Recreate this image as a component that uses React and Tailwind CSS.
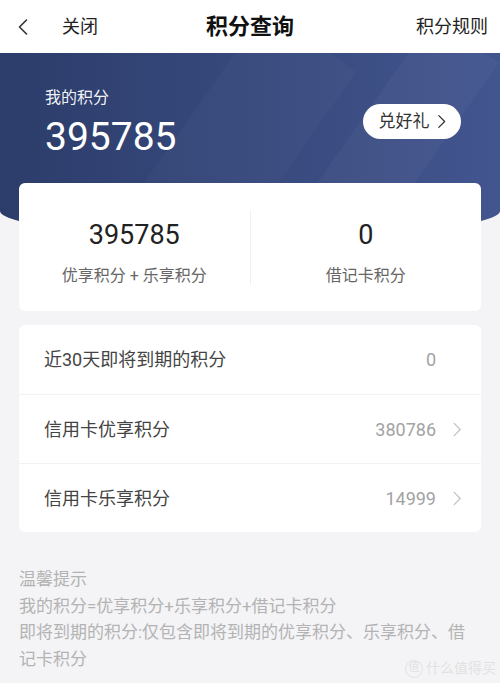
import { ChevronLeft } from 'lucide-react';

const rows = [
  { label: '近30天即将到期的积分', value: '0', arrow: false },
  { label: '信用卡优享积分', value: '380786', arrow: true },
  { label: '信用卡乐享积分', value: '14999', arrow: true },
];

function Arrow({ className }) {
  return (
    <svg viewBox="0 0 10 16" className={className} fill="none" stroke="currentColor" strokeWidth="1.4" strokeLinecap="round" strokeLinejoin="round">
      <path d="M2 1.5 8.5 8 2 14.5" />
    </svg>
  );
}

export default function App() {
  return (
    <div
      className="relative min-h-[683px] w-[500px] overflow-hidden bg-[#f4f4f6]"
      style={{ fontFamily: 'Roboto, "Noto Sans CJK SC", sans-serif' }}
    >
      {/* nav bar */}
      <div className="relative flex h-[53px] items-center bg-white">
        <ChevronLeft className="ml-[9px] h-[28px] w-[28px] text-[#333]" strokeWidth={1.4} />
        <span className="ml-[25px] text-[18px] text-[#222]">关闭</span>
        <span className="absolute left-1/2 -translate-x-1/2 text-[22px] font-bold text-[#111]">积分查询</span>
        <span className="ml-auto mr-[12px] text-[18px] text-[#222]">积分规则</span>
      </div>

      {/* blue header */}
      <div className="relative h-[184px] overflow-hidden rounded-b-[50%_26px] bg-gradient-to-r from-[#2c3d6b] via-[#37497c] to-[#42558f]">
        <div className="absolute -top-[40px] left-[170px] h-[300px] w-[110px] rotate-[35deg] bg-white/[0.025]" />
        <div className="absolute -top-[40px] left-[340px] h-[300px] w-[80px] rotate-[35deg] bg-white/[0.03]" />
        <div className="relative flex items-start justify-between pl-[45px] pr-[39px] pt-[34px]">
          <div>
            <div className="text-[16px] leading-[22px] text-white/95">我的积分</div>
            <div className="mt-[6px] text-[39px] leading-[44px] text-white">395785</div>
          </div>
          <div className="mt-[17px] flex h-[35px] w-[98px] items-center justify-center rounded-full bg-white text-[17px] text-[#333]">
            兑好礼
            <Arrow className="ml-[7px] h-[15px] w-[9px]" />
          </div>
        </div>
      </div>

      {/* summary card */}
      <div className="relative mx-[19px] -mt-[54px] flex h-[128px] items-center rounded-[6px] bg-white pt-[12px]">
        <div className="flex flex-1 flex-col items-center">
          <div className="text-[27px] leading-[32px] text-[#222]">395785</div>
          <div className="mt-[14px] text-[16px] leading-[22px] text-[#666]">优享积分 + 乐享积分</div>
        </div>
        <div className="-mt-[12px] h-[75px] w-px bg-[#f0f0f0]" />
        <div className="flex flex-1 flex-col items-center">
          <div className="text-[27px] leading-[32px] text-[#222]">0</div>
          <div className="mt-[14px] text-[16px] leading-[22px] text-[#666]">借记卡积分</div>
        </div>
      </div>

      {/* detail list */}
      <div className="mx-[19px] mt-[14px] rounded-[6px] bg-white">
        {rows.map((row, i) => (
          <div
            key={row.label}
            className={`flex h-[69px] items-center pl-[25px] pr-[19px] ${i > 0 ? 'border-t border-[#f3f3f3]' : ''}`}
          >
            <span className="text-[18px] text-[#444]">{row.label}</span>
            <span className="ml-auto text-[18px] text-[#a3a3a3]">{row.value}</span>
            <span className="ml-[16px] flex w-[10px] justify-center">
              {row.arrow && <Arrow className="h-[15px] w-[10px] text-[#c4c4c4]" />}
            </span>
          </div>
        ))}
      </div>

      {/* tips */}
      <div className="mt-[34px] px-[19px] text-[17px] leading-[26.5px] text-[#b3b3b3]">
        <div>温馨提示</div>
        <div>我的积分=优享积分+乐享积分+借记卡积分</div>
        <div className="whitespace-nowrap">即将到期的积分:仅包含即将到期的优享积分、乐享积分、借</div>
        <div>记卡积分</div>
      </div>

      <div className="absolute bottom-[4px] right-[4px] flex items-center gap-[3px] text-[14px] text-[#e2e2e2]">
        <span className="flex h-[18px] w-[18px] items-center justify-center rounded-full border border-[#e2e2e2] text-[11px]">值</span>
        什么值得买
      </div>
    </div>
  );
}
